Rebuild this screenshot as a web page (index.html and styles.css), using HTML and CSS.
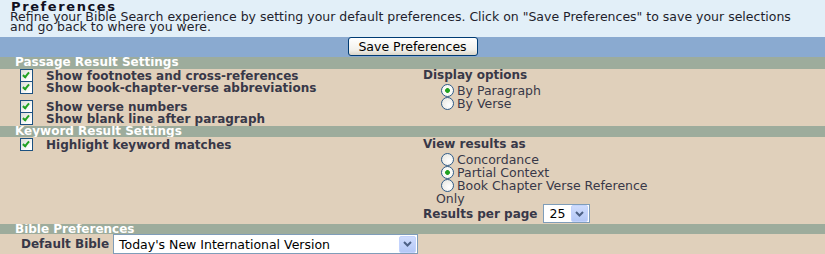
FILE: index.html
```html
<!DOCTYPE html>
<html lang="en">
<head>
    <meta charset="UTF-8">
    <title>Preferences</title>
    <link rel="stylesheet" href="styles.css">
</head>
<body>
    <div class="intro">
        <h1>Preferences</h1>
        <p>Refine your Bible Search experience by setting your default preferences. Click on "Save Preferences" to save your selections and go back to where you were.</p>
    </div>

    <div class="savebar">
        <button class="save">Save Preferences</button>
    </div>

    <!-- Passage results -->
    <div class="section-title">Passage Result Settings</div>
    <div class="section passage">
        <div class="col-left">
            <div class="check-group">
                <div class="check"><span class="box"></span><span class="label">Show footnotes and cross-references</span></div>
                <div class="check"><span class="box"></span><span class="label">Show book-chapter-verse abbreviations</span></div>
            </div>
            <div class="check-group">
                <div class="check"><span class="box"></span><span class="label">Show verse numbers</span></div>
                <div class="check"><span class="box"></span><span class="label">Show blank line after paragraph</span></div>
            </div>
        </div>
        <div class="col-right">
            <div class="opt-title">Display options</div>
            <div class="radio-list">
                <div class="radio"><span class="dot on"></span>By Paragraph</div>
                <div class="radio"><span class="dot"></span>By Verse</div>
            </div>
        </div>
    </div>

    <!-- Keyword results -->
    <div class="section-title title-keyword">Keyword Result Settings</div>
    <div class="section keyword">
        <div class="col-left">
            <div class="check"><span class="box"></span><span class="label">Highlight keyword matches</span></div>
        </div>
        <div class="col-right">
            <div class="opt-title">View results as</div>
            <div class="radio-list">
                <div class="radio"><span class="dot"></span>Concordance</div>
                <div class="radio"><span class="dot on"></span>Partial Context</div>
                <div class="radio"><span class="dot"></span>Book Chapter Verse Reference Only</div>
            </div>
            <div class="per-page">
                <span class="opt-title">Results per page</span>
                <div class="select select-small">
                    <span class="value">25</span>
                    <span class="arrow"><svg width="9" height="6" viewBox="0 0 9 6"><path d="M1 1l3.5 3.5L8 1" fill="none" stroke="#4d6185" stroke-width="2"/></svg></span>
                </div>
            </div>
        </div>
    </div>

    <!-- Bible -->
    <div class="section-title title-bible">Bible Preferences</div>
    <div class="bible-row">
        <span class="bible-label">Default Bible</span>
        <div class="select select-bible">
            <span class="value">Today's New International Version</span>
            <span class="arrow"><svg width="9" height="6" viewBox="0 0 9 6"><path d="M1 1l3.5 3.5L8 1" fill="none" stroke="#4d6185" stroke-width="2"/></svg></span>
        </div>
    </div>
</body>
</html>
```

FILE: styles.css
```css
body {
    margin: 0;
    font-family: "DejaVu Sans", Verdana, sans-serif;
    font-size: 12.5px;
    color: #383848;
    background-color: #e0d0bb;
}

.intro {
    height: 37px;
    padding: 0 20px 0 10px;
    overflow: hidden;
    background-color: #e2eff8;
}

.intro h1 {
    height: 10px;
    margin: 0;
    padding: 2px 0 0 1px;
    font-size: 13px;
    letter-spacing: 1.6px;
    line-height: 10px;
    color: #10101e;
}

.intro p {
    margin: 0;
    line-height: 10px;
    color: #1e1e2c;
}

.savebar {
    height: 20px;
    display: flex;
    justify-content: center;
    background-color: #8aaad0;
}

.save {
    width: 130px;
    height: 19px;
    padding: 0;
    font-family: inherit;
    font-size: 12.5px;
    color: #000;
    border: 1px solid #003c74;
    border-radius: 3px;
    background: linear-gradient(#ffffff, #f2f1ec 70%, #d9d5c8);
}

.section-title {
    height: 12px;
    line-height: 11px;
    padding-left: 15px;
    overflow: hidden;
    font-size: 12px;
    color: #fff;
    font-weight: bold;
    background-color: #9dac9c;
}

.title-keyword {
    height: 11px;
}

.title-bible {
    height: 10px;
}

.section {
    display: flex;
}

.passage {
    height: 57px;
}

.keyword {
    height: 86px;
    padding-top: 1px;
}

.col-left {
    width: 403px;
    padding-left: 20px;
}

.col-right {
    width: 247px;
}

.check-group + .check-group {
    margin-top: 7px;
}

.check {
    display: flex;
    align-items: flex-start;
    height: 12px;
    line-height: 12px;
    font-size: 12px;
    font-weight: bold;
}

.check .label {
    padding-top: 1px;
}

.box {
    position: relative;
    flex: none;
    width: 11px;
    height: 11px;
    margin-right: 13px;
    border: 1px solid #1c5180;
    background: linear-gradient(135deg, #dcdcd6, #ffffff 80%);
}

.box::after {
    content: "";
    position: absolute;
    left: 3px;
    top: 1px;
    width: 2px;
    height: 5px;
    border: solid #21a121;
    border-width: 0 2px 2px 0;
    transform: rotate(40deg);
}

.opt-title {
    font-size: 12px;
    font-weight: bold;
    line-height: 12px;
}

.radio-list {
    margin-top: 3px;
    padding-left: 13px;
}

.radio {
    line-height: 13px;
}

.dot {
    display: inline-block;
    vertical-align: top;
    width: 11px;
    height: 11px;
    margin: 0 3px 0 5px;
    border: 1px solid #2f5c8a;
    border-radius: 50%;
    background: radial-gradient(circle at 65% 65%, #ffffff, #e4e3dc);
}

.dot.on {
    background: radial-gradient(circle, #21a121 0, #21a121 2px, #fafaf6 2.8px);
}

.per-page {
    display: flex;
    align-items: center;
    gap: 6px;
    margin-top: -1px;
}

.select {
    display: flex;
    align-items: center;
    box-sizing: border-box;
    border: 1px solid #7f9db9;
    background-color: #fff;
    color: #000;
}

.select .value {
    flex: 1;
    padding-left: 5px;
    white-space: nowrap;
}

.select .arrow {
    display: flex;
    align-items: center;
    justify-content: center;
    width: 15px;
    height: 15px;
    margin-right: 1px;
    border: 1px solid #c3d3fd;
    border-radius: 2px;
    background: linear-gradient(#cfdcfd, #b4c8f6);
}

.select-small {
    width: 47px;
    height: 19px;
}

.select-bible {
    width: 305px;
    height: 20px;
}

.bible-row {
    display: flex;
    align-items: center;
    padding-left: 21px;
}

.bible-label {
    width: 92px;
    font-size: 12px;
    font-weight: bold;
}
```
